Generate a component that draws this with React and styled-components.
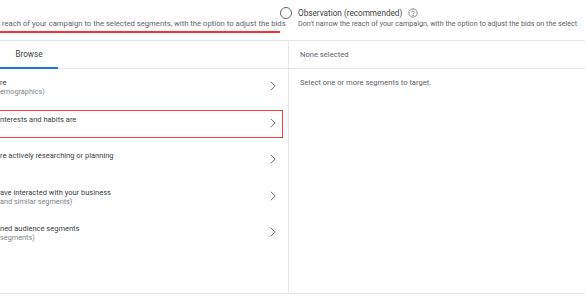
import React from "react";
import styled, { createGlobalStyle } from "styled-components";

const GlobalStyle = createGlobalStyle`
  body {
    margin: 0;
    background: #fff;
    font-family: Roboto, "Liberation Sans", Arial, sans-serif;
    color: #3c4043;
  }
`;

const Page = styled.div`
  width: 585px;
  height: 302px;
  overflow: hidden;
  background: #fff;
`;

const Header = styled.div`
  display: flex;
  height: 40px;
`;

/* left radio option, cut off by the crop */
const TargetOption = styled.div`
  width: 280px;
  flex: none;
  padding-top: 19px;
`;

/* red annotation line under the left option */
const Underline = styled.div`
  height: 2px;
  margin-top: 2px;
  background: #ff3030;
`;

const ObserveOption = styled.div`
  display: flex;
  flex-direction: column;
  padding-top: 7px;
  white-space: nowrap;
  min-width: 0;
`;

const OptionLine = styled.div`
  display: flex;
  align-items: center;
  height: 12px;
`;

const Radio = styled.span`
  width: 12px;
  height: 12px;
  box-sizing: border-box;
  border: 1.3px solid #5f6368;
  border-radius: 50%;
  flex: none;
`;

const OptionLabel = styled.span`
  font-size: 8.2px;
  line-height: 12px;
  color: #3c4043;
  margin-left: 6px;
  margin-right: 6px;
`;

const Description = styled.div`
  font-size: ${(p) => (p.$indent ? "7.2px" : "7.7px")};
  line-height: 10px;
  color: #5f6368;
  white-space: nowrap;
  padding-left: ${(p) => (p.$indent ? "18px" : "2px")};
`;

const Panel = styled.div`
  display: grid;
  grid-template-columns: 289px 1fr;
  height: 252px;
  border-top: 1px solid #e6e6e6;
  border-bottom: 1px solid #e6e6e6;
`;

const BrowsePane = styled.div`
  border-right: 1px solid #e6e6e6;
  display: flex;
  flex-direction: column;
`;

const TabBar = styled.div`
  display: flex;
  height: 27px;
  border-bottom: 1px solid #e6e6e6;
`;

const Tab = styled.div`
  width: 58px;
  display: flex;
  align-items: center;
  justify-content: center;
  font-size: 8.2px;
  color: #3c4043;
  border-bottom: 2px solid ${(p) => (p.$active ? "#1a73e8" : "transparent")};
  margin-bottom: -1px;
`;

const Row = styled.div`
  position: relative;
  display: flex;
  height: 36.5px;
  box-sizing: border-box;
  padding-top: 9px;
  padding-right: 12px;

  ${(p) =>
    p.$highlight &&
    `
    &::after {
      content: "";
      position: absolute;
      top: 4.5px;
      bottom: 4px;
      left: -10px;
      right: 5px;
      border: 1.5px solid #ff3b3b;
    }
  `}
`;

const RowText = styled.div`
  flex: 1;
  white-space: nowrap;
`;

const RowTitle = styled.div`
  font-size: 7.5px;
  line-height: 10px;
  color: #3c4043;
`;

const RowSub = styled.div`
  font-size: 7.3px;
  line-height: 8px;
  color: #80868b;
`;

const Chevron = styled.svg`
  width: 6px;
  height: 10px;
  margin-top: 3px;
  flex: none;
`;

const SelectedPane = styled.div`
  display: flex;
  flex-direction: column;
`;

const SelectedHeader = styled.div`
  height: 27px;
  display: flex;
  align-items: center;
  padding-left: 11px;
  font-size: 7.6px;
  color: #5f6368;
  border-bottom: 1px solid #e6e6e6;
`;

const SelectedBody = styled.div`
  padding: 9px 0 0 11px;
  font-size: 7.6px;
  line-height: 10px;
  color: #5f6368;
`;

const HelpIcon = () => (
  <svg width="10" height="10" viewBox="0 0 24 24" fill="none" stroke="#5f6368" strokeWidth="1.8">
    <circle cx="12" cy="12" r="10" />
    <path d="M9.2 9.5a2.9 2.9 0 0 1 5.6 1c0 2-2.8 2.4-2.8 4.3" strokeLinecap="round" />
    <circle cx="12" cy="17.8" r="0.6" fill="#5f6368" />
  </svg>
);

const rows = [
  { title: "re", sub: "emographics)" },
  { title: "nterests and habits are", highlight: true },
  { title: "re actively researching or planning" },
  { title: "ave interacted with your business", sub: "and similar segments)" },
  { title: "ned audience segments", sub: "segments)" },
];

const App = () => {
  return (
    <Page>
      <GlobalStyle />
      <Header>
        <TargetOption>
          <Description>
            reach of your campaign to the selected segments, with the option to adjust the bids
          </Description>
          <Underline />
        </TargetOption>
        <ObserveOption>
          <OptionLine>
            <Radio />
            <OptionLabel>Observation (recommended)</OptionLabel>
            <HelpIcon />
          </OptionLine>
          <Description $indent>
            Don't narrow the reach of your campaign, with the option to adjust the bids on the select
          </Description>
        </ObserveOption>
      </Header>
      <Panel>
        <BrowsePane>
          <TabBar>
            <Tab $active>Browse</Tab>
          </TabBar>
          {rows.map((r) => (
            <Row key={r.title} $highlight={r.highlight}>
              <RowText>
                <RowTitle>{r.title}</RowTitle>
                {r.sub && <RowSub>{r.sub}</RowSub>}
              </RowText>
              <Chevron viewBox="0 0 6 10">
                <polyline points="0.7,0.7 5.2,5 0.7,9.3" fill="none" stroke="#70757a" strokeWidth="1" />
              </Chevron>
            </Row>
          ))}
        </BrowsePane>
        <SelectedPane>
          <SelectedHeader>None selected</SelectedHeader>
          <SelectedBody>Select one or more segments to target.</SelectedBody>
        </SelectedPane>
      </Panel>
    </Page>
  );
};

export default App;
